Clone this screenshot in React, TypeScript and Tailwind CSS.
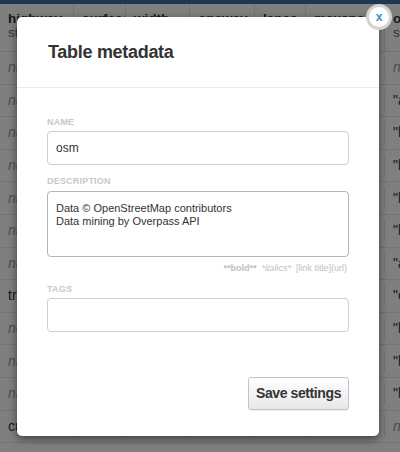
import React from "react";

const cols = [74, 52, 64, 65, 51, 79, 15];
const headers = ["highway", "surface", "width", "oneway", "lanes", "maxspeed", "other_tags"];
const rightCol = ['"a', '"h', '"h', '"h', '"h', '"a', '"c', '"h', '"h', '"h', "nu"];
const leftCol = ["nu", "nu", "nu", "nu", "nu", "nu", "nu", "tra", "nu", "nu", "nu", "cr"];

function Cell({ w, children, last }: { w: number; children?: React.ReactNode; last?: boolean }) {
  return (
    <div
      className={"shrink-0 overflow-hidden whitespace-nowrap px-2 " + (last ? "" : "border-r border-[#e6e6e6]")}
      style={{ width: w }}
    >
      {children}
    </div>
  );
}

export default function App() {
  return (
    <div
      className="relative h-[452px] w-[400px] overflow-hidden bg-white text-[#333]"
      style={{ fontFamily: '"Liberation Sans", Arial, Helvetica, sans-serif' }}
    >
      <div className="h-[4px] bg-[#3d6fa0]" />
      {/* header row */}
      <div className="flex h-[48px] border-b border-[#e6e6e6] text-[13.5px]">
        {cols.map((w, i) => (
          <Cell key={i} w={i === cols.length - 1 ? 40 : w} last={i === cols.length - 1}>
            <div className="pt-[8px] font-bold leading-[14px]">{headers[i]}</div>
            <div className="leading-[14px] text-[#666]">string</div>
          </Cell>
        ))}
      </div>
      {leftCol.map((l, r) => (
        <div key={r} className="flex h-[32.6px] items-center border-b border-[#e6e6e6] text-[14px]">
          {cols.map((w, i) => (
            <Cell key={i} w={i === cols.length - 1 ? 40 : w} last={i === cols.length - 1}>
              {i === 0 ? (
                l === "nu" ? (
                  <span className="italic text-[#999]">null</span>
                ) : (
                  <span>{l === "tra" ? "track" : "crossing"}</span>
                )
              ) : i === cols.length - 1 ? (
                r === 0 ? (
                  <span className="italic text-[#999]">null</span>
                ) : rightCol[r - 1] === "nu" ? (
                  <span className="italic text-[#999]">null</span>
                ) : (
                  <span>{rightCol[r - 1]}xx"</span>
                )
              ) : (
                <span className="italic text-[#999]">null</span>
              )}
            </Cell>
          ))}
        </div>
      ))}

      {/* overlay */}
      <div className="absolute inset-0 bg-black/50" />

      {/* modal */}
      <div className="absolute left-[17px] top-[17px] h-[419px] w-[362px] rounded-[5px] bg-white shadow-[0_3px_8px_rgba(0,0,0,0.5)]">
        <div className="h-[71px] border-b border-[#ebebeb] px-[31px] pt-[24px]">
          <h1 className="text-[18px] font-bold leading-[22px] tracking-[-0.3px] text-[#333]">Table metadata</h1>
        </div>
        <div className="px-[30px] pt-[29px]">
          <div className="text-[9px] font-bold uppercase leading-[11px] tracking-[0.2px] text-[#c8c8c8]">Name</div>
          <div className="mt-[3px] flex h-[34px] items-center rounded-[4px] border border-[#cfcfcf] px-[8px] text-[12px] text-[#333]">
            osm
          </div>
          <div className="mt-[11px] text-[9px] font-bold uppercase leading-[11px] tracking-[0.2px] text-[#c8c8c8]">
            Description
          </div>
          <div className="mt-[4px] h-[66px] rounded-[4px] border border-[#b5b5b5] px-[8px] pt-[10px] text-[11px] leading-[13px] text-[#333]">
            <div>Data © OpenStreetMap contributors</div>
            <div>Data mining by Overpass API</div>
          </div>
          <div className="mt-[6px] flex justify-end gap-[5px] pr-[2px] text-[9px] leading-[11px] text-[#c0c0c0]">
            <span className="font-bold">**bold**</span>
            <span className="italic">*italics*</span>
            <span>[link title](url)</span>
          </div>
          <div className="mt-[10px] text-[9px] font-bold uppercase leading-[11px] tracking-[0.2px] text-[#c8c8c8]">Tags</div>
          <div className="mt-[3px] h-[34px] rounded-[4px] border border-[#cfcfcf]" />
          <div className="mt-[45px] flex justify-end">
            <button className="h-[33px] w-[101px] whitespace-nowrap rounded-[3px] border border-[#c4c4c4] bg-gradient-to-b from-white to-[#e8e8e8] text-[14px] font-bold tracking-[-0.4px] text-[#333] shadow-[0_1px_1px_rgba(0,0,0,0.08)]">
              Save settings
            </button>
          </div>
        </div>
      </div>

      {/* close button */}
      <div className="absolute left-[366px] top-[4px] flex h-[26px] w-[26px] items-center justify-center rounded-full border-[3px] border-[#d4d4d4] bg-white">
        <span className="text-[12px] font-bold leading-none text-[#3a8dd0]">x</span>
      </div>
    </div>
  );
}
